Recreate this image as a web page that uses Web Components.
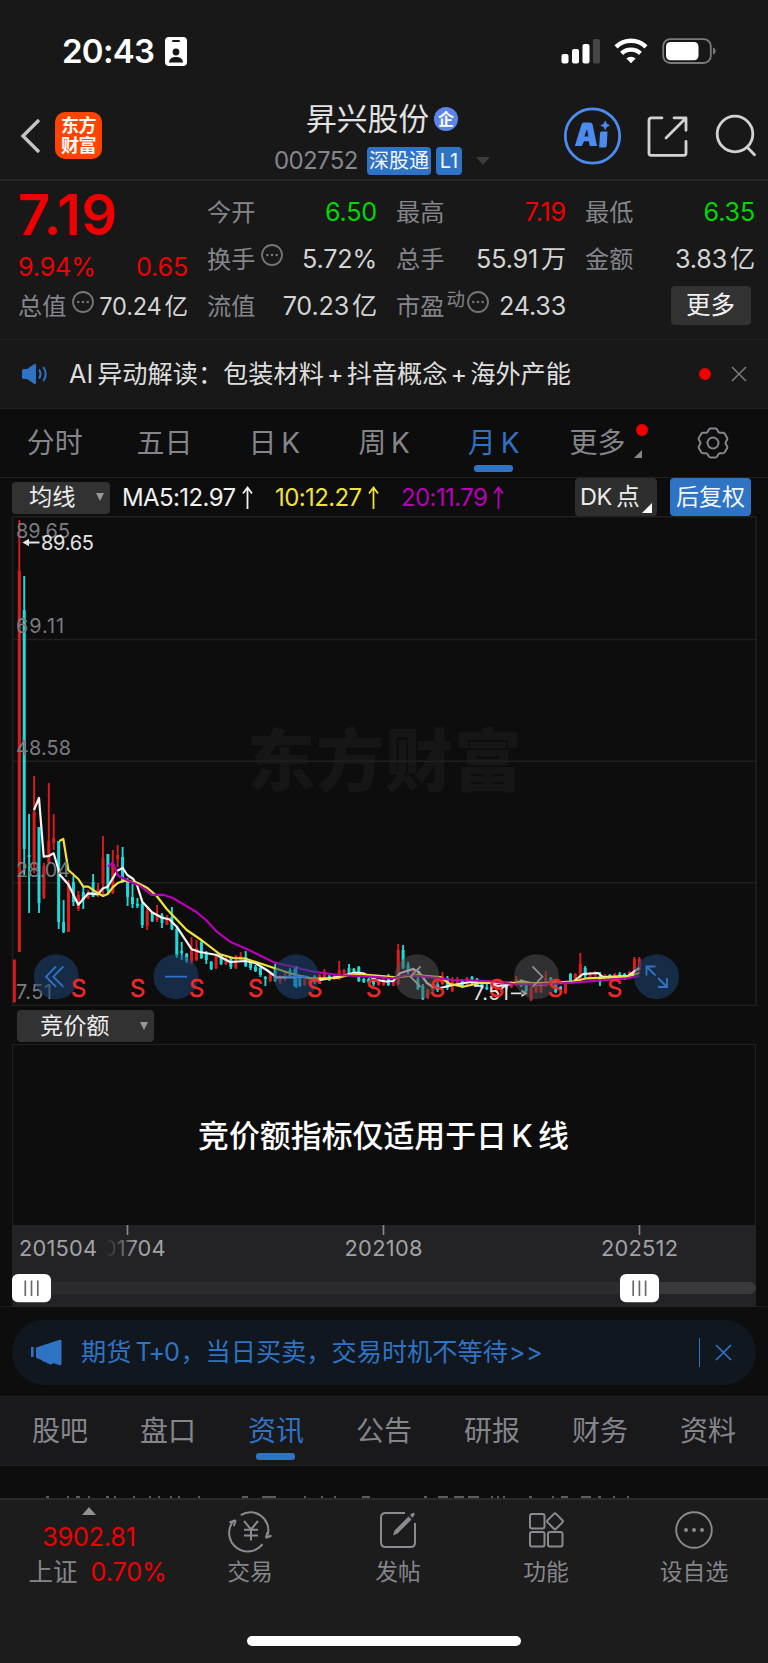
<!DOCTYPE html>
<html lang="zh-CN">
<head>
<meta charset="utf-8">
<title>昇兴股份 002752</title>
<style>
  html, body {
    margin: 0;
    background: #0d0d0d;
  }

  body {
    width: 768px;
    height: 1663px;
    overflow: hidden;
    font-family: Inter, "Noto Sans CJK SC", sans-serif;
    color: #e2e2e2;
    --up: #f00000;
    --down: #00d800;
    --blue: #2f73c4;
    --muted: #85858c;
  }
</style>
</head>
<body>
<stock-page></stock-page>

<script>
/**
 * Registers an element whose shadow root is cloned from a template.
 * @param  {String} name Tag name
 * @param  {String} html Shadow markup, styles included
 */
const define = (name, html, Base = HTMLElement) => {
  const template = document.createElement('template');
  template.innerHTML = html;
  customElements.define(name, class extends Base {
    constructor() {
      super();
      this.attachShadow({ mode: 'open' });
      this.shadowRoot.appendChild(template.content.cloneNode(true));
    }
  });
};

define('status-bar', `
  <style>
    :host {
      display: flex;
      align-items: center;
      height: 80px;
      padding: 22px 52px 0 62px;
      box-sizing: border-box;
      background: #181818;
      color: #fff;
    }
    .time { font-size: 33px; font-weight: 600; line-height: 40px; letter-spacing: -.7px; width: 92px; white-space: nowrap; }
    .id { margin-left: 11px; }
    .right { margin-left: auto; }
    svg { display: block; }
  </style>
  <span class="time">20:43</span>
  <svg class="id" width="22" height="29" viewBox="0 0 22 29">
    <rect width="22" height="29" rx="4" fill="#fff"/>
    <rect x="7" y="3" width="8" height="2" rx="1" fill="#181818"/>
    <circle cx="11" cy="15" r="3.4" fill="#181818"/>
    <path d="M4 25.500c.4-4 3-5.500 7-5.500s6.600 1.500 7 5.500z" fill="#181818"/>
  </svg>
  <svg class="right" width="155" height="28" viewBox="561 37 155 28">
    <g fill="#fff">
      <rect x="561.500" y="54" width="7" height="9.500" rx="2"/>
      <rect x="572" y="49" width="7" height="14.500" rx="2"/>
      <rect x="582.500" y="44" width="7" height="19.500" rx="2"/>
      <rect x="593" y="39" width="7" height="24.500" rx="2" fill="#464646"/>
      <path d="M631 63.300l-4.600-4.700a6.600 6.600 0 0 1 9.200 0z"/>
    </g>
    <path d="M616 46.800a21.500 21.500 0 0 1 30 0M621.600 53.400a13.500 13.500 0 0 1 18.800 0" fill="none" stroke="#fff" stroke-width="4.400"/>
    <rect x="663.200" y="39.200" width="47.600" height="23.800" rx="7" fill="none" stroke="#7a7a7a" stroke-width="1.800"/>
    <rect x="666" y="42" width="32.500" height="18.200" rx="4.500" fill="#fff"/>
    <path d="M713 47.500c3.500 1 3.500 6 0 7z" fill="#7a7a7a"/>
  </svg>
`);

define('stock-header', `
  <style>
    :host {
      display: grid;
      grid-template-columns: 200px 1fr 200px;
      height: 101px;
      box-sizing: border-box;
      background: #181818;
      border-bottom: 2px solid #272727;
    }
    svg { display: block; }
    .left { display: flex; align-items: center; padding: 12px 0 0 20px; }
    .logo {
      display: grid;
      grid-template-columns: 17.500px 17.500px;
      align-content: center;
      justify-content: center;
      margin-left: 14px;
      width: 47px;
      height: 47px;
      border-radius: 10px;
      background: #ff4400;
      color: #fff;
      font-size: 18px;
      font-weight: 700;
      line-height: 20px;
    }
    .mid { display: flex; flex-direction: column; align-items: center; }
    .name { display: flex; align-items: center; margin: 19px 0 0 -4px; font-size: 30.800px; line-height: 40px; }
    .badge {
      display: grid;
      place-items: center;
      width: 24px;
      height: 24px;
      margin-left: 5px;
      border-radius: 50%;
      background: #5a86ea;
      color: #fff;
      font-size: 16px;
      font-weight: 700;
      line-height: 24px;
    }
    .sub { display: flex; align-items: center; margin: 8px 0 0 -4px; color: var(--muted); }
    .code { font-size: 24px; line-height: 28px; width: 85px; letter-spacing: -.6px; }
    .tag {
      height: 28px;
      margin-left: 8px;
      border-radius: 4px;
      background: var(--blue);
      color: #f2f6fb;
      font-size: 20px;
      line-height: 28px;
      padding: 0 2px;
    }
    .tag + .tag { margin-left: 5px; width: 22px; text-align: center; }
    .caret { margin-left: 14px; border: 7px solid transparent; border-top: 8px solid #3d3d3d; border-bottom: 0; }
  </style>
  <div class="left">
    <svg width="21" height="36" viewBox="0 0 21 36">
      <path d="M19 2L3 18l16 16" fill="none" stroke="#c4c4c4" stroke-width="3.400"/>
    </svg>
    <div class="logo"><span>东</span><span>方</span><span>财</span><span>富</span></div>
  </div>
  <div class="mid">
    <div class="name">昇兴股份<span class="badge">企</span></div>
    <div class="sub"><span class="code">002752</span><span class="tag">深股通</span><span class="tag">L1</span><i class="caret"></i></div>
  </div>
  <svg width="200" height="99" viewBox="568 80 200 99" style="overflow: visible">
    <circle cx="592.500" cy="136" r="27.200" fill="none" stroke="#4c8bf0" stroke-width="2.800"/>
    <g fill="#4c8bf0">
      <path fill-rule="evenodd" d="M583.500 122.500h6.500q2 0 2.600 2l4.400 21.500h-7.300l-.9-4.700h-4.700l-2.300 4.700h-7l6.500-20.800q.7-2.700 2.200-2.700zM587 129l-2.700 7.500h4z"/>
      <path d="M601.300 131.600h6.200l-.7 14q-.1 2-2.100 2h-5.600l.9-14.200q.1-1.700 1.300-1.800zM605.300 120.500l1.500 3.300 3.300 1.500-3.300 1.700-1.700 3.200-1.500-3.200-3.400-1.600 3.400-1.600z"/>
    </g>
    <g fill="none" stroke="#d2d2d2" stroke-width="2.800" stroke-linecap="round" stroke-linejoin="round">
      <path d="M662 117.800h-10.500q-2.500 0-2.500 2.500v33q0 2 2 2h33q2 0 2-2v-12M674 117.800h12v12.500M685 119l-19 19"/>
      <circle cx="735" cy="134" r="17.800"/>
      <path d="M747.500 147.500l7 7.200"/>
    </g>
  </svg>
`);

/* One label / value pair; the "note" slot takes the marks beside the label. */
define('quote-cell', `
  <style>
    :host { display: flex; align-items: center; height: 47px; color: #d4d4d4; font-size: 25.200px; white-space: nowrap; }
    :host([up]) { color: var(--up); }
    :host([down]) { color: var(--down); }
    .label { display: flex; align-items: center; margin-left: -1px; color: var(--muted); font-size: 24.200px; line-height: 47px; }
    .value { display: flex; gap: 3px; margin-left: auto; line-height: 47px; letter-spacing: -.2px; }
  </style>
  <span class="label"><slot name="label"></slot><slot name="note"></slot></span>
  <span class="value"><slot></slot><slot name="unit"></slot></span>
`);

define('info-dot', `
  <style>
    :host { display: block; margin: -10px 0 0 6px; }
    svg { display: block; }
  </style>
  <svg width="22" height="22" viewBox="0 0 22 22" fill="#74747a">
    <circle cx="11" cy="11" r="10" fill="none" stroke="#74747a" stroke-width="1.800"/>
    <circle cx="6.300" cy="11" r="1.300"/><circle cx="11" cy="11" r="1.300"/><circle cx="15.700" cy="11" r="1.300"/>
  </svg>
`);

define('quote-board', `
  <style>
    :host {
      display: grid;
      grid-template-columns: repeat(4, 169px);
      column-gap: 20px;
      height: 159px;
      padding: 8px 13px 0 19px;
      box-sizing: border-box;
      background: #181818;
      border-bottom: 1px solid #222;
    }
    .price { color: var(--up); font-size: 56px; font-weight: 600; line-height: 53px; height: 53px; letter-spacing: .6px; margin-left: -1px; }
    .change { display: flex; justify-content: space-between; height: 41px; color: var(--up); font-size: 25.200px; line-height: 50px; letter-spacing: -.2px; margin-left: -1px; }
    sup { align-self: flex-start; margin-left: 2px; color: var(--muted); font-size: 18.500px; line-height: 32px; }
    .more {
      width: 80px;
      height: 39px;
      margin: 3px 4px 0 auto;
      border-radius: 4px;
      background: #323233;
      color: #f0f0f0;
      font-size: 24.500px;
      line-height: 39px;
      text-align: center;
      text-indent: -1px;
    }
  </style>
  <div>
    <div class="price">7.19</div>
    <div class="change"><span>9.94%</span><span>0.65</span></div>
    <quote-cell style="font-size: 23.600px"><span slot="label">总值</span><info-dot slot="note"></info-dot>70.24<span slot="unit">亿</span></quote-cell>
  </div>
  <div>
    <quote-cell down><span slot="label">今开</span>6.50</quote-cell>
    <quote-cell><span slot="label">换手</span><info-dot slot="note"></info-dot>5.72%</quote-cell>
    <quote-cell><span slot="label">流值</span>70.23<span slot="unit">亿</span></quote-cell>
  </div>
  <div>
    <quote-cell up><span slot="label">最高</span>7.19</quote-cell>
    <quote-cell><span slot="label">总手</span>55.91<span slot="unit">万</span></quote-cell>
    <quote-cell><span slot="label">市盈</span><sup slot="note">动</sup><info-dot slot="note" style="margin-left: 2px"></info-dot>24.33</quote-cell>
  </div>
  <div>
    <quote-cell down><span slot="label">最低</span>6.35</quote-cell>
    <quote-cell><span slot="label">金额</span>3.83<span slot="unit">亿</span></quote-cell>
    <div class="more">更多</div>
  </div>
`);

define('ai-notice', `
  <style>
    :host {
      display: flex;
      align-items: center;
      height: 69px;
      padding: 0 21px;
      box-sizing: border-box;
      background: #181818;
      border-bottom: 1px solid #1f1f1f;
    }
    svg { display: block; }
    .text { margin-left: 21px; font-size: 25.200px; line-height: 67px; white-space: nowrap; color: #dedede; }
    .text b { display: inline-block; width: 22.800px; text-align: center; font-weight: 400; }
    .dot { width: 12px; height: 12px; margin: 0 20px 0 auto; border-radius: 50%; background: var(--up); }
  </style>
  <svg width="27" height="22" viewBox="0 0 27 22">
    <path d="M1 7.500q0-1.500 1.500-1.500H6l7.500-5q1.500-.8 1.500 1v18q0 1.800-1.500 1L6 16H2.500Q1 16 1 14.500z" fill="var(--blue)"/>
    <path d="M18 6.500q3 4.500 0 9M22.300 4q4.800 7 0 14" fill="none" stroke="var(--blue)" stroke-width="2"/>
  </svg>
  <span class="text">AI<span style="margin-left: 4px">异动解读：包装材料</span><b>+</b>抖音概念<b>+</b>海外产能</span>
  <i class="dot"></i>
  <svg width="16" height="16" viewBox="0 0 16 16"><path d="M1 1l14 14M15 1L1 15" stroke="#7d7d80" stroke-width="1.500"/></svg>
`);

define('tab-strip', `
  <style>
    :host {
      display: grid;
      grid-auto-flow: column;
      grid-auto-columns: 1fr;
      height: 69px;
      box-sizing: border-box;
      border-bottom: 1px solid #212121;
    }
    :host([panel]) {
      height: 70px;
      padding: 0 6px;
      background: #19191b;
      border-top: 1px solid #222;
    }
  </style>
  <slot></slot>
`);

define('tab-item', `
  <style>
    :host {
      position: relative;
      display: flex;
      justify-content: center;
      align-items: center;
      padding-bottom: 1px;
      color: var(--muted);
      font-size: 28px;
      line-height: 66px;
      white-space: nowrap;
      word-spacing: -3px;
    }
    :host([active]) { color: var(--blue); }
    :host([active])::after {
      content: "";
      position: absolute;
      left: calc(50% - 20px);
      bottom: 5px;
      width: 39px;
      height: 7px;
      border-radius: 3px;
      background: var(--blue);
    }
  </style>
  <slot></slot>
`);

define('drop-button', `
  <style>
    :host {
      display: flex;
      align-items: center;
      height: 32px;
      box-sizing: border-box;
      border-radius: 4px;
      background: #323233;
      color: #ececec;
      font-size: 23.200px;
      line-height: 31px;
    }
    i { margin: 0 6px 1px auto; border: 4.500px solid transparent; border-top: 8px solid #98989c; border-bottom: 0; }
  </style>
  <slot></slot><i></i>
`);

define('ma-legend', `
  <style>
    :host { display: flex; align-items: center; height: 38px; padding: 0 17px 0 12px; white-space: nowrap; }
    drop-button { width: 98px; padding-left: 17px; margin-top: 1px; }
    span { display: flex; font-size: 24px; line-height: 39px; letter-spacing: -.6px; box-sizing: border-box; }
    svg { display: block; margin: 8px 0 0 6px; }
    .dk {
      position: relative;
      margin-left: auto;
      width: 82px;
      height: 38px;
      padding-left: 5px;
      box-sizing: border-box;
      border-radius: 4px;
      background: #2e2e2f;
      color: #ececec;
      font-size: 23.500px;
      line-height: 38px;
      letter-spacing: -.4px;
      word-spacing: -2px;
    }
    .dk::after {
      content: "";
      position: absolute;
      right: 5px;
      bottom: 3px;
      border: 5.500px solid #fff;
      border-top-color: transparent;
      border-left-color: transparent;
    }
    .adj {
      margin-left: 13px;
      width: 81px;
      height: 38px;
      border-radius: 4px;
      background: var(--blue);
      color: #f4f8fd;
      font-size: 23px;
      line-height: 38px;
      text-align: center;
    }
  </style>
  <drop-button>均线</drop-button>
  <span style="color: #f0f0f0; margin-left: 12px; width: 153px">MA5:12.97<svg width="11" height="24" viewBox="0 0 11 24" fill="none" stroke="#f0f0f0" stroke-width="1.800"><path d="M5.500 23V1.500M1 7.500l4.500-6 4.500 6"/></svg></span>
  <span style="color: #efe23c; width: 126px">10:12.27<svg width="11" height="24" viewBox="0 0 11 24" fill="none" stroke="#efe23c" stroke-width="1.800"><path d="M5.500 23V1.500M1 7.500l4.500-6 4.500 6"/></svg></span>
  <span style="color: #b800b8">20:11.79<svg width="11" height="24" viewBox="0 0 11 24" fill="none" stroke="#b800b8" stroke-width="1.800"><path d="M5.500 23V1.500M1 7.500l4.500-6 4.500 6"/></svg></span>
  <div class="dk">DK 点</div>
  <div class="adj">后复权</div>
`);

// Monthly candles: direction, high, body top, body bottom, low (chart units)
const CANDLES = `
r 520 571 952 952,c 576 610 849 875,c 814 855 857 913,r 776 812 865 873,c 827 827 903 913,r 863 866 898 899,r 783 841 863 863,r 814 838 843 850,
c 841 841 922 929,c 900 922 932 933,r 880 884 932 932,c 876 882 902 906,r 891 895 909 911,c 886 892 900 909,r 890 893 898 899,c 874 882 897 897,
r 883 889 895 897,r 836 858 884 895,c 854 854 890 893,r 850 864 893 894,r 845 855 859 867,c 847 857 882 883,c 878 880 897 906,c 884 897 904 908,
c 898 904 906 908,c 902 904 925 928,r 908 911 926 930,c 912 913 921 922,r 905 914 920 922,c 913 915 923 928,r 915 917 925 925,c 907 917 929 930,
c 926 929 956 958,c 942 951 953 960,c 953 954 961 963,r 937 950 962 964,r 940 948 960 961,c 940 942 958 959,c 951 953 960 964,c 961 962 969 970,
r 955 956 968 969,c 955 956 964 965,r 957 958 964 965,c 957 958 967 969,r 955 956 968 969,r 952 956 960 962,c 951 957 966 967,c 960 961 968 970,
c 965 967 971 972,c 966 968 975 977,c 976 977 979 986,r 973 974 981 982,c 964 969 981 982,r 975 976 982 984,r 972 972 979 981,c 968 970 976 977,
c 966 970 986 987,c 976 976 986 987,r 976 977 985 986,r 977 978 984 986,c 975 976 982 984,r 974 975 983 984,r 969 974 979 980,c 975 976 980 981,
r 975 976 979 980,r 961 970 979 980,r 969 970 976 977,c 964 968 974 975,c 968 969 975 976,c 966 967 981 982,c 978 979 982 983,c 978 979 982 984,
c 977 978 984 986,r 979 980 985 986,r 977 978 985 986,c 974 978 985 986,r 980 982 986 986,r 944 950 984 985,c 945 950 968 969,c 962 965 972 976,
r 969 970 974 976,c 970 979 989 990,c 984 986 999 1000,r 989 990 998 999,r 984 986 990 993,c 982 984 990 992,r 972 976 984 985,c 976 978 988 990,
r 977 980 991 992,r 977 979 984 986,c 979 981 987 988,r 977 978 984 985,c 976 977 983 984,c 978 979 985 986,c 981 982 988 989,c 984 987 989 990,
r 981 983 990 991,r 980 982 992 993,r 983 985 992 993,c 982 983 988 990,r 981 982 987 988,r 976 979 985 986,c 979 981 986 987,c 981 983 991 992,
r 986 988 1000 1001,r 982 983 992 993,r 981 982 992 993,r 971 978 986 987,c 977 978 984 985,c 979 981 992 993,c 986 987 989 990,r 981 983 993 994,
c 973 974 983 984,r 973 974 980 981,r 953 964 978 979,c 966 968 976 978,r 972 973 978 979,r 971 972 976 977,c 972 976 982 986,r 974 975 980 981,
c 974 975 979 980,r 973 974 979 980,c 972 974 978 979,c 973 974 979 980,r 971 972 978 979,r 957 959 974 975,r 957 959 970 973`
  .trim().split(',').map(row => row.trim().split(' '));

const AVERAGES = {
  '#f5f5f5': '34,810 39,798 43.7,856.7 48.7,856 53.7,853.3 60,875 68.3,884.3 78.3,904.7 88.3,893.3 98,894.3 103,888.3 107.7,886.7 117.3,870.7 122.7,868 127.3,875 133.3,879 137.3,886 142.3,901.7 152,912.3 162,917.7 169.3,919.3 176.7,926.7 191.7,949.3 200,952 216.7,955 230,962 245.7,961 255.7,963.3 266.7,970 276.7,977.3 290,977.3 303.3,976.7 320,980 339.3,976.7 354,972.7 363.3,973.3 376.7,980 386,981.5 393.3,981 400,973.3 413,969 419,972 427,983 433,987 440,988 453,985 470,982 490,983 497,986 507,985 522,981 540,985 560,982 573,982 583,974 598,973 603,977 628,976 639.300,968',
  '#efe23c': '59.3,841 63.3,839 68.3,870 78.3,879 83.3,886.7 88.3,886.7 98,893.3 103,896 107.7,894 112.7,887.3 117.3,883.3 123.3,880.7 137.3,882.7 147,887.7 156.7,896 166.7,909 186.7,930 201.3,940 220,954.3 233.3,958 245.7,958.7 256.7,962.3 290,973.3 310,978.3 336.7,978 353.3,974 370,975 396.7,977.3 416.7,975 440,977 450,984 463,986.7 480,983 497,982.7 540,983 573,981.7 586.7,978.3 606.7,977.7 626.7,976.7 639.300,973',
  '#b800b8': '108,866.7 112.7,862.7 118.3,875.7 128.3,880.7 140,885.7 151.7,895 163.3,894.7 173.3,898.3 196.7,912.3 206.7,920.7 216.7,931.7 230,941.7 246.7,949 275,962.7 293.3,966.7 313.3,971.7 338.3,975 370,976.7 393.3,978.3 406.7,975 440,978.3 453,980 490,981 513,984 540,984.3 573,982.7 613,979.3 626.7,978.3 639.300,976'
};

const SELLS = [78.8, 137.7, 196.7, 255.7, 314.7, 373.7, 437.5, 496.7, 555.5, 614.7];

define('k-chart', `
  <style>
    :host { display: block; height: 490px; }
    svg { display: block; font-family: inherit; }
    .mark { font: 900 68px "Noto Sans CJK SC", sans-serif; fill: #161616; }
    .axis { font-size: 19.800px; fill: #7c7c81; }
    .peak { font-size: 20px; fill: #e4e4e4; }
    .sell { font-size: 24px; fill: #f02a2a; text-anchor: middle; stroke: #f02a2a; stroke-width: .4; }
  </style>
  <svg width="768" height="490" viewBox="0 516 768 490">
    <text class="mark" x="247" y="786" textLength="275">东方财富</text>
    <g fill="none" stroke="#202021" stroke-width="1.500">
      <path d="M12 639.500H756M12 761.300H756M12 882.800H756" />
      <rect x="12.500" y="516.700" width="743.500" height="488.800"/>
    </g>
    <g class="candles"></g>
    <g class="lines" fill="none" stroke-width="2.200" stroke-linejoin="round"></g>
    <rect x="13" y="959.500" width="2.800" height="43" fill="#e01a1a"/>
    <g class="axis">
      <text x="16" y="538" textLength="54">89.65</text>
      <text x="16" y="632.500" textLength="48">69.11</text>
      <text x="16" y="754.500" textLength="55">48.58</text>
      <text x="16" y="876.500" textLength="54">28.04</text>
      <text x="16" y="998.700" textLength="36">7.51</text>
    </g>
    <g class="peak">
      <path d="M22.500 542.500l6.500-3.800v7.600zM27 541.600h12.500v1.800H27z"/>
      <text x="41" y="549.500" textLength="53">89.65</text>
      <text x="473" y="1000.300" textLength="36">7.51</text>
      <path d="M528 993.300l-6.500-3.800v7.600zM511 992.400h12v1.800h-12z"/>
    </g>
    <g fill="#1f4472" fill-opacity=".56">
      <circle cx="56.300" cy="976.700" r="22.500"/><circle cx="176" cy="976.700" r="22.500"/>
      <circle cx="296.300" cy="976.700" r="22.500"/><circle cx="656.500" cy="976.700" r="22.500"/>
    </g>
    <g fill="#515155" fill-opacity=".52">
      <circle cx="417" cy="976.700" r="22.500"/><circle cx="536.500" cy="976.700" r="22.500"/>
    </g>
    <g class="sells"></g>
    <g fill="none" stroke="#2f74c8" stroke-width="1.800">
      <path d="M56 966.500l-10 10.200 10 10.200M63.300 966.500l-10 10.200 10 10.200"/>
      <path d="M165 976.700h22M285.500 976.700h22M296.500 966v22"/>
      <path d="M655.500 966.500h-9v9M646.500 966.500l9 9M658 987h9v-9M667 987l-9-9"/>
    </g>
    <g fill="none" stroke="#8e8e91" stroke-width="1.800">
      <path d="M420.500 966.500l-10 10.200 10 10.200M532.500 966.500l10 10.200-10 10.200"/>
    </g>
  </svg>
`, class extends HTMLElement {
  connectedCallback() {
    const colors = { r: '#dc1c1c', c: '#1fdada' };
    const find = selector => this.shadowRoot.querySelector(selector);
    find('.candles').innerHTML = CANDLES.map(([dir, high, top, bottom, low], i) => {
      const x = (19.3 + 4.921 * i).toFixed(1);
      return `<path d="M${x} ${high}V${low}" stroke="${colors[dir]}" stroke-width="1.9"/>
        <path d="M${x} ${top}V${bottom}" stroke="${colors[dir]}" stroke-width="3"/>`;
    }).join('');
    find('.lines').innerHTML = Object.entries(AVERAGES)
      .map(([color, points]) => `<polyline points="${points}" stroke="${color}"/>`).join('');
    find('.sells').innerHTML = SELLS
      .map(x => `<text class="sell" x="${x}" y="997">S</text>`).join('');
  }
});

define('indicator-panel', `
  <style>
    :host { display: block; height: 219px; }
    .bar { display: flex; height: 38px; padding: 4px 0 0 17px; box-sizing: border-box; }
    drop-button { width: 137px; padding-left: 23px; }
    .plot {
      height: 181px;
      margin: 0 12px;
      box-sizing: border-box;
      border: 1px solid #202021;
      border-bottom: 0;
      color: #fff;
      font-size: 30.900px;
      font-weight: 500;
      line-height: 181px;
      text-align: center;
      text-indent: -1px;
    }
    .k { display: inline-block; width: 31px; text-align: center; }
  </style>
  <div class="bar"><drop-button>竞价额</drop-button></div>
  <div class="plot">竞价额指标仅适用于日<span class="k">K</span>线</div>
`);

define('time-axis', `
  <style>
    :host { display: block; height: 82px; background: #0d0d0d; border-bottom: 1px solid #1c1c1c; box-sizing: border-box; }
    svg { display: block; font-family: inherit; }
    text { font-size: 21.800px; fill: #a2a2a5; }
  </style>
  <svg width="768" height="82" viewBox="0 1225 768 82">
    <defs>
      <linearGradient id="fade"><stop offset=".4" stop-color="#232325"/><stop offset="1" stop-color="#232325" stop-opacity="0"/></linearGradient>
    </defs>
    <rect x="12" y="1225" width="744" height="82" fill="#232325"/>
    <path d="M127.500 1225v10M383.500 1225v10M639.500 1225v10" stroke="#8c8c8f" stroke-width="1.600"/>
    <text x="89.500" y="1256" textLength="76">201704</text>
    <rect x="84" y="1236" width="54" height="26" fill="url(#fade)"/>
    <rect x="14" y="1236" width="90" height="26" fill="#232325"/>
    <text x="19" y="1256" textLength="78">201504</text>
    <text x="344.500" y="1256" textLength="78">202108</text>
    <text x="601" y="1256" textLength="77">202512</text>
    <rect x="14" y="1282" width="742" height="12" rx="6" fill="#39393b"/>
    <rect x="14" y="1282" width="620" height="12" fill="#2c2c2e"/>
    <g fill="#fff">
      <rect x="12" y="1274" width="39" height="28.300" rx="6"/><rect x="620" y="1274" width="39" height="28.300" rx="6"/>
    </g>
    <path d="M25.300 1280.500v15.500M31.500 1280.500v15.500M37.800 1280.500v15.500M633.200 1280.500v15.500M639.400 1280.500v15.500M645.600 1280.500v15.500" stroke="#6a6a6d" stroke-width="1.700"/>
  </svg>
`);

define('promo-banner', `
  <style>
    :host {
      display: flex;
      align-items: center;
      height: 65px;
      margin: 13px 12px 11px;
      padding: 0 24px 0 19px;
      box-sizing: border-box;
      border-radius: 32px;
      background: #10171f;
      color: var(--blue);
    }
    svg { display: block; }
    .text { margin-left: 19px; font-size: 25.200px; line-height: 65px; white-space: nowrap; }
    .t0 { display: inline-block; width: 45px; padding-left: 4px; letter-spacing: -1.200px; }
    .gt { margin-left: 1px; letter-spacing: .4px; }
    .rule { width: 1.500px; height: 29px; margin: 0 15px 0 auto; background: var(--blue); }
  </style>
  <svg width="31" height="27" viewBox="0 0 31 27" fill="var(--blue)">
    <path d="M0 8h2.600v10H0zM5 9.500q0-1 1-1.300L28 1q2.500-.8 2.500 1.500v22q0 2.300-2.500 1.500L22 24q-.8 2-3 1.300l-3-1-2-1.800q-2.500.8-3.200-1.500L6 19.300Q5 19 5 18z"/>
  </svg>
  <span class="text">期货<span class="t0">T+0</span>，当日买卖，交易时机不等待<span class="gt">&gt;&gt;</span></span>
  <i class="rule"></i>
  <svg width="17" height="17" viewBox="0 0 17 17"><path d="M1 1l15 15M16 1L1 16" stroke="var(--blue)" stroke-width="1.700"/></svg>
`);

/* Feed whose first row is covered by the bottom bar up to the glyph tops. */
define('news-peek', `
  <style>
    :host { display: block; height: 32px; }
    svg { display: block; }
  </style>
  <svg width="768" height="32" viewBox="0 0 768 32">
    <path d="M46 31h3M67 31h2M76 31h4M88 31h2M106 31h3M114 31h2M133 31h2M149 31h2M158 31h2M170 31h2M178 31h2M198 31h2M242 31h6M262 31h14M304 31h2M321 31h2M334 31h2M362 31h8M424 31h3M438 31h10M454 31h10M468 31h11M491 31h2M497 31h2M503 31h2M529 31h3M552 31h2M561 31h7M581 31h10M598 31h3M613 31h2M627 31h2" stroke="#5d5d60" stroke-width="2"/>
  </svg>
`);

define('nav-item', `
  <style>
    :host { display: flex; flex-direction: column; align-items: center; width: 148px; color: var(--muted); }
    span { margin-top: 5px; font-size: 22.800px; line-height: 32px; }
  </style>
  <slot name="icon"></slot>
  <span><slot></slot></span>
`);

define('bottom-nav', `
  <style>
    :host { display: flex; flex-direction: column; height: 165px; box-sizing: border-box; background: #1c1c1c; border-top: 2px solid #2c2c2d; color: var(--muted); }
    .items { display: flex; height: 92px; }
    .index { display: flex; flex-direction: column; width: 176px; padding-left: 2px; box-sizing: border-box; align-items: center; font-size: 25.200px; white-space: nowrap; }
    .index i { margin-top: 7px; border: 7px solid transparent; border-bottom: 8px solid #909095; border-top: 0; }
    .index b { margin-top: 4px; font-weight: 400; line-height: 36px; color: var(--up); letter-spacing: -.2px; }
    .index div { display: flex; gap: 13px; margin: 1px 0 0 32px; width: 153px; line-height: 32px; }
    em { font-style: normal; color: var(--up); letter-spacing: -.1px; }
    nav-item { padding-top: 9px; }
    .home { width: 274px; height: 10px; margin: 44px auto 0; border-radius: 5px; background: #fff; }
    svg { display: block; }
  </style>
  <div class="items">
    <div class="index"><i></i><b>3902.81</b><div><span style="font-size: 24.500px">上证</span><em>0.70%</em></div></div>
    <nav-item>
      <svg slot="icon" width="46" height="42" viewBox="-1 0 46 42" fill="none" stroke="#8a8a90" stroke-width="2" style="overflow: visible">
        <path d="M12.800 6.200A17.800 17.800 0 0 1 39.500 26.500M5 12.500A17.800 17.800 0 0 0 34.500 35.200"/>
        <path d="M1.500 13.500l5-2q1.300-.3.800 1l-1.500 4.500M43.500 26.500l-4.500 2q-1.200.3-.8-1l1.500-4.500"/>
        <path d="M16 12l7 8.500 7-8.500M16 20.700h14M16 26.500h14M23 20.500v11"/>
      </svg>交易
    </nav-item>
    <nav-item>
      <svg slot="icon" width="40" height="42" viewBox="0 0 40 42" fill="none" stroke="#8a8a90" stroke-width="2">
        <path d="M27 4H7.500Q3 4 3 8.500v24.500Q3 38 7.500 38h25q4.500 0 4.500-4.500V14"/>
        <path d="M15 26.500l1.500-5L30.500 7.500l3 3-14 14zM32 6l2.500-2q1.500-.6 2 .5t-.5 2L34.500 9z" fill="#8a8a90" stroke="none"/>
      </svg>发帖
    </nav-item>
    <nav-item>
      <svg slot="icon" width="40" height="42" viewBox="0 0 40 42" fill="none" stroke="#8a8a90" stroke-width="2">
        <rect x="4" y="5" width="14.500" height="14.500" rx="2"/><rect x="4" y="23" width="14.500" height="14.500" rx="2"/>
        <rect x="22" y="23" width="14.500" height="14.500" rx="2"/><rect x="23" y="6.300" width="12" height="12" rx="1.500" transform="rotate(45 29 12.300)"/>
      </svg>功能
    </nav-item>
    <nav-item>
      <svg slot="icon" width="40" height="42" viewBox="0 0 40 42" fill="#8a8a90">
        <circle cx="20" cy="21" r="17.800" fill="none" stroke="#8a8a90" stroke-width="1.900"/>
        <circle cx="12" cy="21" r="2"/><circle cx="20" cy="21" r="2"/><circle cx="28" cy="21" r="2"/>
      </svg>设自选
    </nav-item>
  </div>
  <div class="home"></div>
`);

define('stock-page', `
  <style>
    :host { display: block; width: 768px; }
    i { align-self: flex-end; margin: 0 0 18px 9px; border: 4px solid #85858c; border-top-color: transparent; border-left-color: transparent; }
    .more { padding-left: 5px; }
    .new { position: absolute; top: 15px; right: 10px; width: 12px; height: 12px; border-radius: 50%; background: #f00000; }
  </style>
  <status-bar></status-bar>
  <stock-header></stock-header>
  <quote-board></quote-board>
  <ai-notice></ai-notice>
  <tab-strip>
    <tab-item>分时</tab-item>
    <tab-item>五日</tab-item>
    <tab-item>日 K</tab-item>
    <tab-item>周 K</tab-item>
    <tab-item active>月 K</tab-item>
    <tab-item class="more">更多<i></i><b class="new"></b></tab-item>
    <tab-item>
      <svg width="34" height="34" viewBox="0 0 34 34" fill="none" stroke="#85858c" stroke-width="2" stroke-linejoin="round">
        <path d="M14.500 2.500h5q1 0 1.600 1l1.200 2.200q.5 1 1.600 1h3q1.200 0 1.800 1l2.400 4q.6 1 0 2l-1.300 2.300q-.5 1 0 2l1.300 2.300q.6 1 0 2l-2.400 4q-.6 1-1.800 1h-3q-1.100 0-1.600 1l-1.200 2.200q-.6 1-1.600 1h-5q-1 0-1.600-1l-1.200-2.200q-.5-1-1.600-1h-3q-1.200 0-1.800-1l-2.400-4q-.6-1 0-2l1.300-2.300q.5-1 0-2l-1.300-2.300q-.6-1 0-2l2.400-4q.6-1 1.800-1h3q1.100 0 1.600-1l1.200-2.200q.6-1 1.600-1z"/>
        <circle cx="17" cy="17" r="5.500"/>
      </svg>
    </tab-item>
  </tab-strip>
  <ma-legend></ma-legend>
  <k-chart></k-chart>
  <indicator-panel></indicator-panel>
  <time-axis></time-axis>
  <promo-banner></promo-banner>
  <tab-strip panel>
    <tab-item>股吧</tab-item>
    <tab-item>盘口</tab-item>
    <tab-item active>资讯</tab-item>
    <tab-item>公告</tab-item>
    <tab-item>研报</tab-item>
    <tab-item>财务</tab-item>
    <tab-item>资料</tab-item>
  </tab-strip>
  <news-peek></news-peek>
  <bottom-nav></bottom-nav>
`);
</script>
</body>
</html>
